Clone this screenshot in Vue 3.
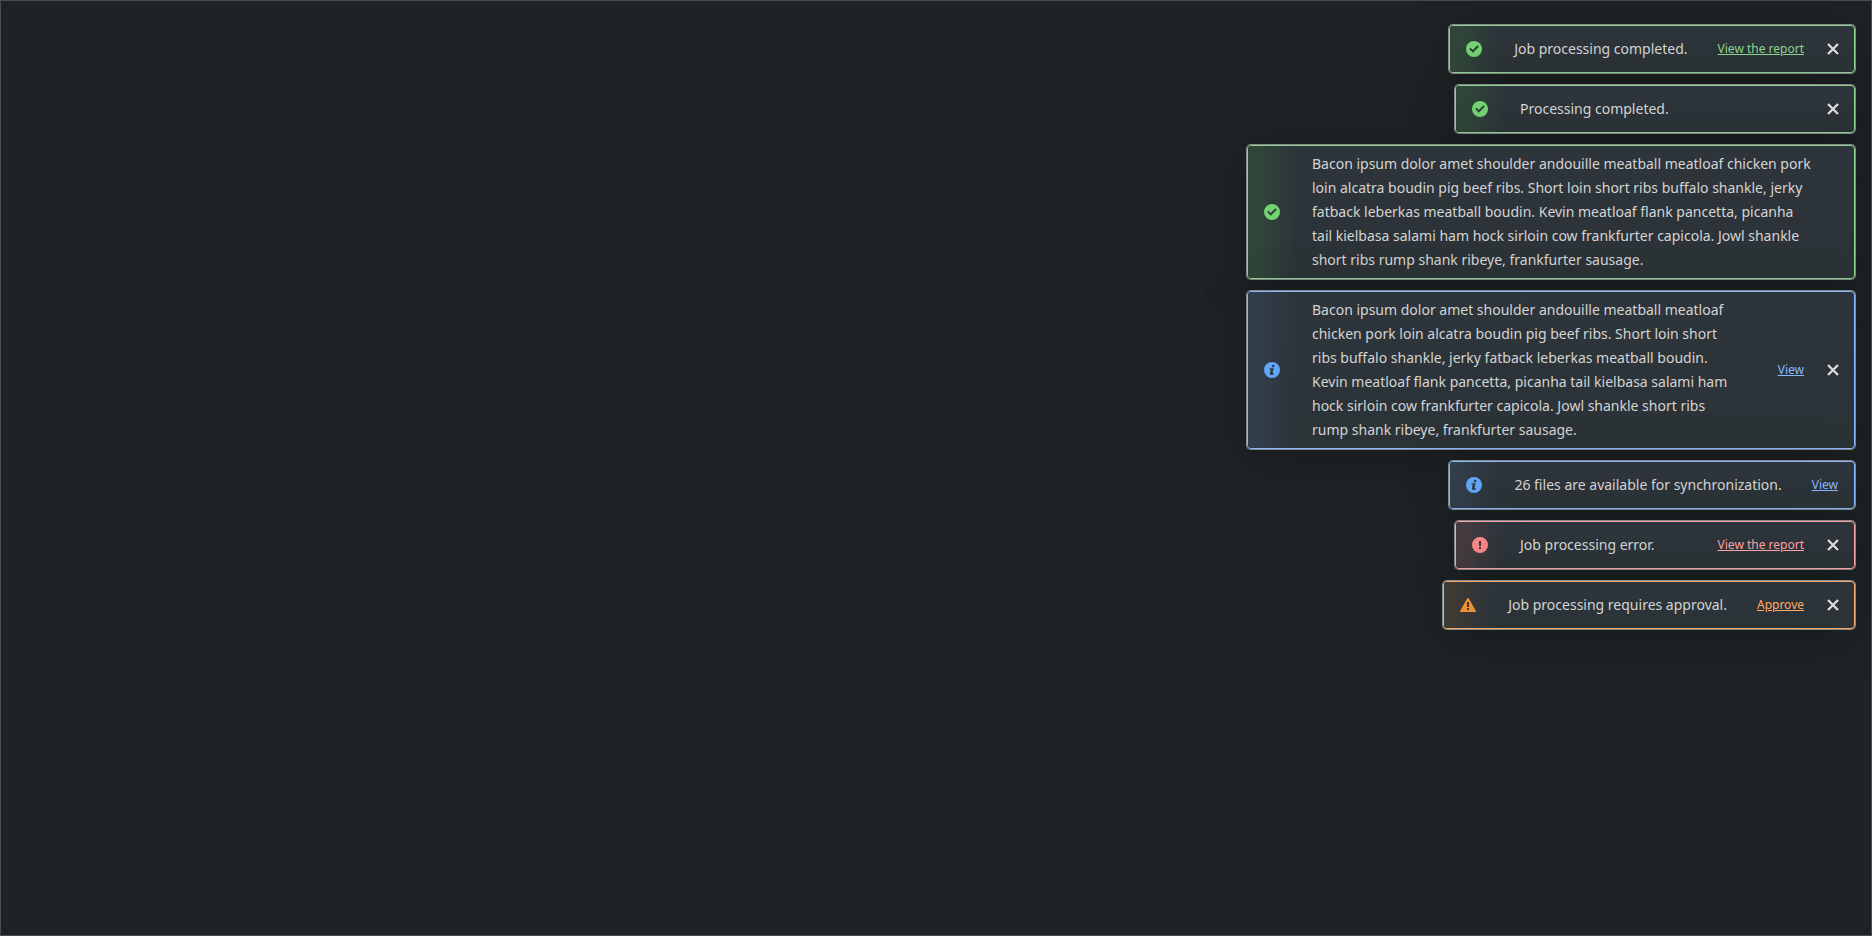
<script setup>
const bacon =
  'Bacon ipsum dolor amet shoulder andouille meatball meatloaf chicken pork loin alcatra boudin pig beef ribs. Short loin short ribs buffalo shankle, jerky fatback leberkas meatball boudin. Kevin meatloaf flank pancetta, picanha tail kielbasa salami ham hock sirloin cow frankfurter capicola. Jowl shankle short ribs rump shank ribeye, frankfurter sausage.'

const toasts = [
  { kind: 'success', text: 'Job processing completed.', action: 'View the report', closable: true },
  { kind: 'success', text: 'Processing completed.', closable: true },
  { kind: 'success', text: bacon, long: true },
  { kind: 'info', text: bacon, long: true, action: 'View', closable: true },
  { kind: 'info', text: '26 files are available for synchronization.', action: 'View' },
  { kind: 'error', text: 'Job processing error.', action: 'View the report', closable: true },
  { kind: 'warning', text: 'Job processing requires approval.', action: 'Approve', closable: true }
]
</script>

<template>
  <main class="page">
    <section class="toasts" aria-label="Notifications">
      <article
        v-for="(toast, index) in toasts"
        :key="index"
        class="toast"
        :class="[toast.kind, { long: toast.long }]"
      >
        <div class="status">
          <svg class="icon" viewBox="0 0 16 16" aria-hidden="true">
            <path
              v-if="toast.kind === 'success'"
              fill-rule="evenodd"
              d="M8 0a8 8 0 1 1 0 16A8 8 0 0 1 8 0Zm4.8 5.7-1.400-1.400-4.600 4.600-2.200-2.200-1.400 1.400 3.600 3.600Z"
            />
            <path
              v-else-if="toast.kind === 'info'"
              fill-rule="evenodd"
              d="M8 0a8 8 0 1 1 0 16A8 8 0 0 1 8 0Zm1.100 2.800a1.300 1.300 0 1 0 0 2.600 1.300 1.300 0 0 0 0-2.600ZM5.700 6.300l-.2 1.100h1.200L6 10.800c-.3 1.400.3 2.200 1.500 2.200 1.100 0 1.800-.4 2.500-1.100l-.4-.8c-.8.5-1.200.4-1-.3l1-4.500Z"
            />
            <path
              v-else-if="toast.kind === 'error'"
              fill-rule="evenodd"
              d="M8 0a8 8 0 1 1 0 16A8 8 0 0 1 8 0ZM7 4v5h2V4Zm0 6v2h2v-2Z"
            />
            <path
              v-else
              fill-rule="evenodd"
              d="M7.300 1.300a.8.8 0 0 1 1.400 0l7.200 12.700a.7.7 0 0 1-.6 1H.7a.7.7 0 0 1-.6-1ZM7 5v5h2V5Zm0 6v2h2v-2Z"
            />
          </svg>
        </div>
        <div class="body">
          <p class="text">{{ toast.text }}</p>
          <a v-if="toast.action" class="action" href="#">{{ toast.action }}</a>
          <button v-if="toast.closable" class="close" type="button" aria-label="Close">
            <svg viewBox="0 0 12 12" aria-hidden="true"><path d="m1 1 10 10M11 1 1 11" /></svg>
          </button>
        </div>
      </article>
    </section>
  </main>
</template>

<style>
body {
  margin: 0;
  background: #1e2224;
}
</style>

<style scoped>
.page {
  box-sizing: border-box;
  min-height: 100vh;
  padding: 24px 16px;
  border: 1px solid #434e56;
  background: #1e2325;
  color: #d4d4d4;
  font-family: "Noto Sans", sans-serif;
  overflow: hidden;
}

.toasts {
  display: flex;
  flex-direction: column;
  align-items: flex-end;
  gap: 12px;
}

.toast {
  --line: #90d491;
  --accent: #73d272;
  --tint: #304539;
  box-sizing: border-box;
  display: flex;
  min-width: 400px;
  max-width: 608px;
  min-height: 48px;
  border: 1px solid var(--line);
  border-radius: 4px;
  background: linear-gradient(#2d343b, #2c3337);
  box-shadow: 0 0 0 1px #85898c, 0 8px 48px rgb(0 0 0 / 25%);
}

.info {
  --line: #8ab8ff;
  --accent: #62a6f8;
  --tint: #323e4b;
}

.error {
  --line: #ffa2a6;
  --accent: #f88686;
  --tint: #433b40;
}

.warning {
  --line: #ffab68;
  --accent: #f09033;
  --tint: #3e3a35;
}

.status {
  display: flex;
  flex: none;
  align-items: center;
  padding: 0 16px;
  border-radius: 3px 0 0 3px;
  background: linear-gradient(to right, var(--tint) 20%, transparent);
}

.icon {
  display: block;
  width: 16px;
  height: 16px;
  fill: var(--accent);
}

.body {
  display: flex;
  flex: 1;
  align-items: center;
  gap: 24px;
  padding: 6px 16px;
}

.text {
  flex: 1;
  margin: 0;
  padding-right: 6px;
  font-size: 14px;
  line-height: 24px;
}

.long .text {
  padding-right: 16px;
}

.long .text:last-child {
  padding-right: 24px;
}

.action {
  flex: none;
  color: var(--line);
  font-size: 12px;
  line-height: 16px;
  text-decoration: underline;
}

.close {
  display: flex;
  flex: none;
  margin: 0 -1px;
  padding: 0;
  border: 0;
  background: none;
  cursor: pointer;
}

.close svg {
  width: 12px;
  height: 12px;
  fill: none;
  stroke: #dcdcdc;
  stroke-width: 2.3;
}
</style>
